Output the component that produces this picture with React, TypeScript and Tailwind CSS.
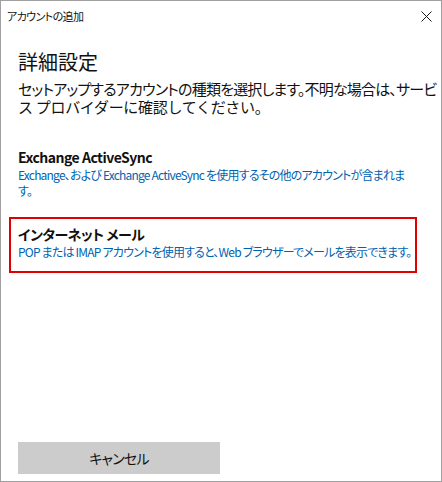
import React from 'react';

const jp = "font-['Noto_Sans_CJK_JP','Noto_Sans',sans-serif] [font-feature-settings:'palt']";

function CloseIcon() {
  return (
    <svg width="11" height="11" viewBox="0 0 11 11" fill="none">
      <path d="M0.5 0.5L10.5 10.5M10.5 0.5L0.5 10.5" stroke="#1a1a1a" strokeWidth="1" />
    </svg>
  );
}

function Option({
  title,
  lines,
  selected,
}: {
  title: string;
  lines: string[];
  selected?: boolean;
}) {
  return (
    <div
      className={
        'border-2 px-[7px] pt-[5px] pb-[11px] ' +
        (selected ? 'border-[#e00000]' : 'border-transparent')
      }
    >
      <div className="text-[14px] leading-[20px] font-semibold tracking-[-0.5px] text-[#111]">{title}</div>
      {lines.map((l, i) => (
        <div key={i} className="text-[12px] leading-[16px] tracking-[-0.8px] whitespace-nowrap text-[#0063b1]">
          {l}
        </div>
      ))}
    </div>
  );
}

export default function App() {
  return (
    <div className={'w-[442px] h-[482px] bg-white border border-[#a0a0a0] flex flex-col ' + jp}>
      <div className="h-[30px] flex items-center justify-between pl-[6px] pr-[9px]">
        <span className="text-[11px] tracking-[-0.6px] text-[#111]">アカウントの追加</span>
        <CloseIcon />
      </div>

      <div className="px-[17px] pt-[18px]">
        <h1 className="text-[20px] leading-[26px] font-normal text-[#111]">詳細設定</h1>
        <div className="mt-[5px] text-[15px] leading-[18px] text-[#111] whitespace-nowrap">
          <div className="tracking-[-0.8px]">セットアップするアカウントの種類を選択します。不明な場合は、サービ</div>
          <div className="[font-feature-settings:normal] tracking-[-0.3px]">ス プロバイダーに確認してください。</div>
        </div>
      </div>

      <div className="mt-[24px] px-[8px] mr-[16px] flex flex-col gap-[5px]">
        <Option
          title="Exchange ActiveSync"
          lines={[
            'Exchange、および Exchange ActiveSync を使用するその他のアカウントが含まれま',
            'す。',
          ]}
        />
        <Option
          title="インターネット メール"
          lines={['POP または IMAP アカウントを使用すると、Web ブラウザーでメールを表示できます。']}
          selected
        />
      </div>

      <div className="flex-1" />

      <div className="px-[17px] pb-[7px]">
        <button className="w-[202px] h-[32px] bg-[#cccccc] text-[14px] tracking-[-0.8px] text-[#111]">
          キャンセル
        </button>
      </div>
    </div>
  );
}
